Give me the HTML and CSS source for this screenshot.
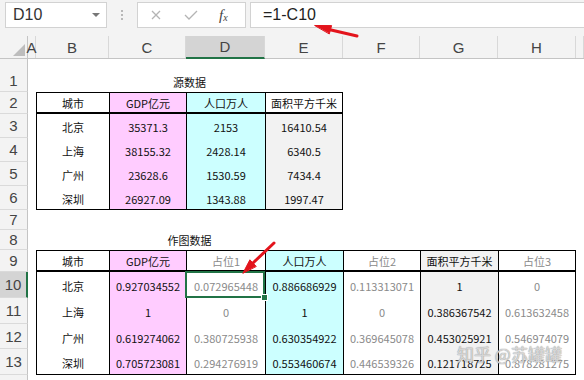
FILE: index.html
```html
<!DOCTYPE html>
<html lang="zh">
<head>
    <meta charset="UTF-8">
    <title>Sheet</title>
    <link rel="stylesheet" href="styles.css">
</head>
<body>

    <div class="toolbar">
        <div class="namebox">D10 <span class="caret"></span></div>
        <div class="dots"><i></i><i></i><i></i></div>
        <div class="fxbox">
            <svg width="10" height="10" viewBox="0 0 10 10"><path d="M1 1L9 9M9 1L1 9" stroke="#b4b4b4" stroke-width="1.3" fill="none"/></svg>
            <svg width="14" height="10" viewBox="0 0 14 10"><path d="M1 5L5 9L13 1" stroke="#b4b4b4" stroke-width="1.3" fill="none"/></svg>
            <span class="fx">f<sub>x</sub></span>
        </div>
        <div class="formula">=1-C10</div>
    </div>

    <div class="sheet">
        <div class="row colhead">
            <div class="corner"><svg width="12" height="12" viewBox="0 0 12 12"><path d="M12 0L12 12L0 12Z" fill="#bdbdbd"/></svg></div>
            <div class="ch">A</div><div class="ch">B</div><div class="ch">C</div><div class="ch on">D</div>
            <div class="ch">E</div><div class="ch">F</div><div class="ch">G</div><div class="ch">H</div><div class="ch"></div>
        </div>

        <div class="row h33">
            <div class="rh low">1</div><div></div>
            <div class="c title">源数据</div>
        </div>
        <div class="row h22">
            <div class="rh">2</div><div></div>
            <div class="c t hd">城市</div><div class="c t hd pink">GDP亿元</div><div class="c t hd cyan">人口万人</div><div class="c t hd tr">面积平方千米</div>
        </div>
        <div class="row h24">
            <div class="rh">3</div><div></div>
            <div class="c t">北京</div><div class="c t pink">35371.3</div><div class="c t cyan">2153</div><div class="c t tr grey">16410.54</div>
        </div>
        <div class="row h24">
            <div class="rh">4</div><div></div>
            <div class="c t">上海</div><div class="c t pink">38155.32</div><div class="c t cyan">2428.14</div><div class="c t tr grey">6340.5</div>
        </div>
        <div class="row h24">
            <div class="rh">5</div><div></div>
            <div class="c t">广州</div><div class="c t pink">23628.6</div><div class="c t cyan">1530.59</div><div class="c t tr grey">7434.4</div>
        </div>
        <div class="row h24">
            <div class="rh">6</div><div></div>
            <div class="c t last">深圳</div><div class="c t last pink">26927.09</div><div class="c t last cyan">1343.88</div><div class="c t last tr grey">1997.47</div>
        </div>
        <div class="row h20">
            <div class="rh">7</div>
        </div>
        <div class="row h20">
            <div class="rh">8</div><div></div>
            <div class="c title">作图数据</div>
        </div>
        <div class="row h22">
            <div class="rh">9</div><div></div>
            <div class="c t hd">城市</div><div class="c t hd pink">GDP亿元</div><div class="c t hd dim">占位1</div><div class="c t hd cyan">人口万人</div>
            <div class="c t hd dim">占位2</div><div class="c t hd grey">面积平方千米</div><div class="c t hd tr dim">占位3</div>
        </div>
        <div class="row h26">
            <div class="rh on">10</div><div></div>
            <div class="c t">北京</div><div class="c t pink">0.927034552</div><div class="c t dim sel">0.072965448</div><div class="c t cyan">0.886686929</div>
            <div class="c t dim">0.113313071</div><div class="c t grey">1</div><div class="c t tr dim">0</div>
        </div>
        <div class="row h26">
            <div class="rh">11</div><div></div>
            <div class="c t">上海</div><div class="c t pink">1</div><div class="c t dim">0</div><div class="c t cyan">1</div>
            <div class="c t dim">0</div><div class="c t grey">0.386367542</div><div class="c t tr dim">0.613632458</div>
        </div>
        <div class="row h25">
            <div class="rh">12</div><div></div>
            <div class="c t">广州</div><div class="c t pink">0.619274062</div><div class="c t dim">0.380725938</div><div class="c t cyan">0.630354922</div>
            <div class="c t dim">0.369645078</div><div class="c t grey">0.453025921</div><div class="c t tr dim">0.546974079</div>
        </div>
        <div class="row h26">
            <div class="rh">13</div><div></div>
            <div class="c t last">深圳</div><div class="c t last pink">0.705723081</div><div class="c t last dim">0.294276919</div><div class="c t last cyan">0.553460674</div>
            <div class="c t last dim">0.446539326</div><div class="c t last grey">0.121718725</div><div class="c t last tr dim">0.878281275</div>
        </div>
        <div class="row h6">
            <div class="rh"></div>
        </div>
    </div>

    <div class="watermark">知乎 @苏罐罐</div>

    <svg class="arrows" width="584" height="380" viewBox="0 0 584 380">
        <g fill="#e3141c" stroke="#e3141c" stroke-linecap="round">
            <path d="M357 36L329 29.5" stroke-width="3" fill="none"/>
            <path d="M315 25.5L331.6 25.6L329.4 33.6Z" stroke-width="1"/>
            <path d="M274 243L253 263" stroke-width="3" fill="none"/>
            <path d="M243 273L249.9 259.8L256 266.2Z" stroke-width="1"/>
        </g>
    </svg>

</body>
</html>
```

FILE: styles.css
```css
body {
    margin: 0;
    width: 584px;
    height: 380px;
    overflow: hidden;
    position: relative;
    background: #fff;
    font-family: "Noto Sans CJK SC", sans-serif;
    color: #111;
}

.toolbar {
    height: 36px;
    box-sizing: border-box;
    padding-top: 2px;
    background: #f3f3f3;
    display: flex;
    align-items: flex-start;
}

.namebox {
    margin-left: 5px;
    width: 102px;
    height: 26px;
    box-sizing: border-box;
    padding-left: 7px;
    background: #fff;
    border: 1px solid #d2d2d2;
    display: flex;
    align-items: center;
    font: 16px "Liberation Sans", sans-serif;
    color: #333;
}

.caret {
    margin-left: auto;
    margin-right: 6px;
    border-left: 4px solid transparent;
    border-right: 4px solid transparent;
    border-top: 4px solid #777;
}

.dots {
    width: 30px;
    height: 26px;
    display: flex;
    flex-direction: column;
    align-items: center;
    justify-content: center;
    gap: 2px;
}

.dots i {
    width: 2px;
    height: 2px;
    background: #b8b8b8;
}

.fxbox {
    width: 109px;
    height: 26px;
    box-sizing: border-box;
    background: #fff;
    border: 1px solid #d2d2d2;
    display: flex;
    align-items: center;
    padding-left: 13px;
    gap: 23px;
}

.fx {
    font: italic 15px "Liberation Serif", serif;
    color: #444;
    margin-left: -2px;
}

.fx sub {
    font-size: 10px;
    vertical-align: -1px;
}

.formula {
    margin-left: 4px;
    flex: 1;
    height: 26px;
    box-sizing: border-box;
    padding-left: 12px;
    background: #fff;
    border: 1px solid #d2d2d2;
    border-right: none;
    display: flex;
    align-items: center;
    font: 16px "Liberation Sans", sans-serif;
    color: #222;
}

.row {
    display: grid;
    grid-template-columns: 28px 8px 73px 77px 79px 78px 77px 78px 78px 8px;
}

.colhead {
    height: 22px;
    background: #f3f3f3;
    border-bottom: 1px solid #c4c4c4;
}

.corner {
    border-right: 1px solid #c4c4c4;
    display: flex;
    align-items: flex-end;
    justify-content: flex-end;
    padding: 0 2px 2px 0;
}

.ch {
    border-right: 1px solid #d8d8d8;
    display: flex;
    align-items: center;
    justify-content: center;
    font: 15px "Liberation Sans", sans-serif;
    color: #444;
    white-space: nowrap;
}

.ch.on {
    background: #d4d4d4;
    border-bottom: 2px solid #217346;
    margin-bottom: -1px;
}

.h33 { height: 33px; }
.h26 { height: 26px; }
.h25 { height: 25px; }
.h24 { height: 24px; }
.h22 { height: 22px; }
.h20 { height: 20px; }
.h6 { height: 6px; }

.rh {
    box-sizing: border-box;
    background: #f3f3f3;
    border-right: 1px solid #c4c4c4;
    border-bottom: 1px solid #dadada;
    display: flex;
    align-items: center;
    justify-content: center;
    font: 15px "Liberation Sans", sans-serif;
    color: #444;
}

.rh.low {
    align-items: flex-end;
    padding-bottom: 2px;
}

.rh.on {
    background: #d4d4d4;
    border-right: 2px solid #217346;
}

.c {
    box-sizing: border-box;
    display: flex;
    align-items: center;
    justify-content: center;
    padding-top: 2px;
    font-size: 11px;
    white-space: nowrap;
}

.title {
    grid-column: 3 / 7;
    align-items: flex-end;
    padding-bottom: 2px;
}

.t { border-left: 1px solid #000; }
.tr { border-right: 1px solid #000; }
.hd {
    border-top: 1px solid #000;
    border-bottom: 2px solid #000;
    padding-top: 0;
}
.last { border-bottom: 1px solid #000; }

.pink { background: #ffccff; }
.cyan { background: #ccffff; }
.grey { background: #f2f2f2; }
.dim { color: #8a8a8a; }

.sel {
    position: relative;
}

.sel::after {
    content: "";
    position: absolute;
    top: -1px;
    left: -2px;
    right: 0;
    bottom: 0;
    border: 2px solid #217346;
}

.sel::before {
    content: "";
    position: absolute;
    right: -3px;
    bottom: -3px;
    width: 5px;
    height: 5px;
    background: #217346;
    border: 1px solid #fff;
    z-index: 2;
}

.watermark {
    position: absolute;
    left: 457px;
    top: 341px;
    font-size: 17px;
    color: rgba(255, 255, 255, 0.6);
    text-shadow: 0 0 1px #999, 0 0 1px #999;
    white-space: nowrap;
    z-index: 4;
}

.arrows {
    position: absolute;
    top: 0;
    left: 0;
    pointer-events: none;
    z-index: 5;
}
```
